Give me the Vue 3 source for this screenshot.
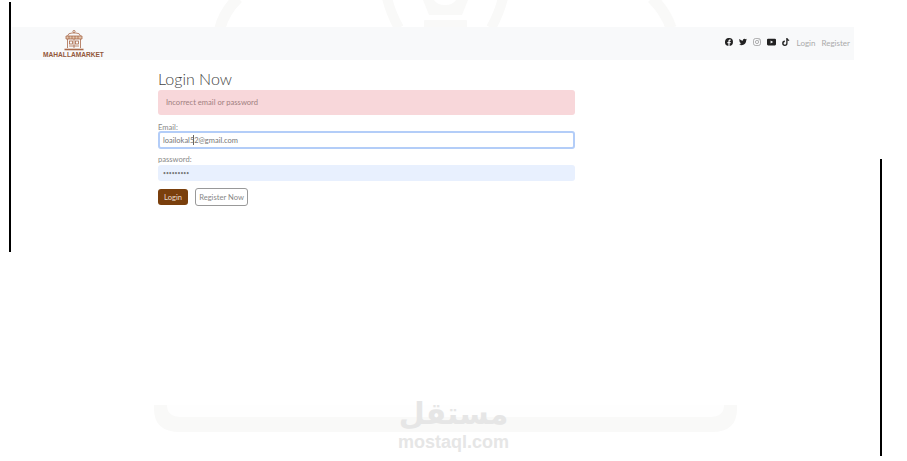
<template>
  <div class="page">
    <svg class="wm wm-top" width="907" height="30" viewBox="0 0 907 30" fill="none">
      <path d="M238 -2 Q224 12 220 28" stroke="#f9f9f8" stroke-width="11" />
      <path d="M652 -2 Q666 12 671 28" stroke="#f9f9f8" stroke-width="11" />
      <path d="M387 -2 Q391 14 399 28" stroke="#f9f9f8" stroke-width="10" />
      <path d="M503 -2 Q499 14 491 28" stroke="#f9f9f8" stroke-width="10" />
      <path d="M423 0 H434 Q437 5 445 5 Q453 5 456 0 H468 L462 15 H429 Z" fill="#f9f9f8" />
      <rect x="424" y="20" width="43" height="8" rx="1" fill="#f9f9f8" />
    </svg>
    <svg class="wm wm-bottom" width="907" height="40" viewBox="0 0 907 40" fill="none">
      <path d="M154 5 H737 V9 Q737 32 712 32 H180 Q154 32 154 9 Z" fill="#f9f9f8" />
      <path d="M167 5 H724 Q724 17 710 17 H181 Q167 17 167 5 Z" fill="#fefefe" />
    </svg>
    <div class="wm-logo">
      <div class="wm-ar">مستقل</div>
      <div class="wm-en">mostaql.com</div>
    </div>

    <span class="line line-left"></span>
    <span class="line line-right"></span>

    <nav class="navbar">
      <a class="brand">
        <svg width="20" height="21" viewBox="0 0 20 21" fill="none" stroke="#a9694a" stroke-width=".8">
          <circle cx="10" cy="1.500" r="1.100" />
          <path d="M3.500 6 Q4 3 8 3 H12 Q16 3 16.500 6" />
          <path d="M2 6 H18 V9 H2 Z" fill="#e2c5ae" />
          <path d="M5 6 V9 M8 6 V9 M11 6 V9 M14 6 V9" />
          <path d="M3.500 9 V18 M16.500 9 V18 M10 9 V18" />
          <rect x="5.500" y="11" width="3" height="3" />
          <rect x="11.500" y="11" width="3" height="3" />
          <path d="M5 16 H15" />
          <path d="M0.500 19.500 H19.500" stroke-width="1.600" />
        </svg>
        <span class="brand-name">MAHALLAMARKET</span>
      </a>
      <div class="nav-right">
        <svg class="ico" viewBox="0 0 16 16" width="8" height="8">
          <path d="M16 8a8 8 0 1 0-9.250 7.900v-5.590H4.720V8h2.030V6.240c0-2 1.190-3.110 3.020-3.110.87 0 1.790.16 1.790.16v1.970h-1c-1 0-1.300.62-1.300 1.250V8h2.220l-.36 2.310H9.250v5.590A8 8 0 0 0 16 8z" />
        </svg>
        <svg class="ico" viewBox="0 0 16 16" width="8" height="8">
          <path d="M5 14.500c6 0 9.300-5 9.300-9.300v-.4A6.700 6.700 0 0 0 16 3a6.500 6.500 0 0 1-1.900.5A3.300 3.300 0 0 0 15.500 1.700a6.600 6.600 0 0 1-2.100.8 3.300 3.300 0 0 0-5.600 3A9.300 9.300 0 0 1 1.100 2a3.300 3.300 0 0 0 1 4.400A3.300 3.300 0 0 1 .6 6v.04a3.300 3.300 0 0 0 2.600 3.200 3.300 3.300 0 0 1-1.500.06 3.300 3.300 0 0 0 3.100 2.300A6.600 6.600 0 0 1 0 13a9.300 9.300 0 0 0 5 1.500z" />
        </svg>
        <svg class="ico-line" viewBox="0 0 16 16" width="8" height="8" fill="none" stroke="#777" stroke-width="1.100">
          <rect x="1" y="1" width="14" height="14" rx="4" />
          <circle cx="8" cy="8" r="3.200" />
          <circle cx="12" cy="4" r=".4" />
        </svg>
        <svg class="ico" viewBox="0 0 16 12" width="9" height="8">
          <path fill-rule="evenodd" d="M2 0h12a2 2 0 0 1 2 2v8a2 2 0 0 1-2 2H2a2 2 0 0 1-2-2V2a2 2 0 0 1 2-2zM6.400 3.400v5.200L11 6z" />
        </svg>
        <svg class="ico" viewBox="0 0 16 16" width="8" height="8">
          <path d="M8.500 0h2.600c.2 1.900 1.300 3.100 3.200 3.300v2.700a5.700 5.700 0 0 1-3.200-1v5.500A5.400 5.400 0 1 1 5.700 5.100v2.800a2.700 2.700 0 1 0 2.800 2.600z" />
        </svg>
        <a class="nav-link login-link">Login</a>
        <a class="nav-link">Register</a>
      </div>
    </nav>

    <main class="content">
      <h1>Login Now</h1>
      <div class="alert">Incorrect email or password</div>
      <form @submit.prevent>
        <label for="email">Email:</label>
        <div class="field">
          <input id="email" class="focused" type="email" value="loailokal52@gmail.com" />
          <span class="caret"></span>
        </div>
        <label for="password">password:</label>
        <input id="password" class="filled" type="password" value="123456789" />
        <div class="actions">
          <button class="btn-login">Login</button>
          <button class="btn-register">Register Now</button>
        </div>
      </form>
    </main>
  </div>
</template>

<script setup>
</script>

<style>
html,
body {
  margin: 0;
  background: #fff;
}
</style>

<style scoped>
.page {
  position: relative;
  width: 907px;
  height: 461px;
  overflow: hidden;
  padding-top: 27px;
  box-sizing: border-box;
  background: #fff;
  font-family: Lato, "Noto Sans", sans-serif;
  color: #666;
}

.wm {
  position: absolute;
  left: 0;
}

.wm-top {
  top: 0;
}

.wm-bottom {
  top: 400px;
}

.wm-logo {
  position: absolute;
  left: 388px;
  top: 397px;
  width: 131px;
  text-align: center;
  color: #e6e6e6;
  font-family: "DejaVu Sans", sans-serif;
  font-weight: 700;
}

.wm-ar {
  font-size: 30px;
  line-height: 34px;
}

.wm-en {
  font-family: "Liberation Sans", sans-serif;
  font-size: 18px;
  line-height: 16px;
  margin-top: 3px;
}

.line {
  position: absolute;
  width: 2px;
  background: #000;
}

.line-left {
  left: 9px;
  top: 2px;
  height: 250px;
}

.line-right {
  left: 880px;
  top: 159px;
  height: 297px;
}

.navbar {
  position: relative;
  display: flex;
  align-items: center;
  justify-content: space-between;
  height: 33px;
  width: 842px;
  margin-left: 12px;
  padding: 0 4px 0 32px;
  box-sizing: border-box;
  background: #f8f9fa;
}

.brand {
  display: flex;
  flex-direction: column;
  align-items: center;
  width: 59px;
}

.brand-name {
  font-family: "Liberation Sans", sans-serif;
  font-size: 6.600px;
  font-weight: 700;
  line-height: 7px;
  color: #93583a;
  white-space: nowrap;
}

.nav-right {
  display: flex;
  align-items: center;
  gap: 6px;
  padding-bottom: 3px;
}

.ico {
  fill: #222;
}

.nav-link {
  margin-top: 2px;
  font-size: 8px;
  color: #aaa;
}

.login-link {
  margin-left: 1px;
}

.content {
  position: relative;
  width: 417px;
  margin-left: 158px;
}

h1 {
  margin: 0;
  padding-top: 8px;
  font-size: 16px;
  font-weight: 300;
  line-height: 22px;
  color: #444;
}

.alert {
  height: 25px;
  padding-left: 8px;
  border-radius: 3px;
  background: #f8d7da;
  color: #a07f80;
  font-size: 7.600px;
  line-height: 25px;
}

label {
  display: block;
  font-size: 7.600px;
  line-height: 8px;
  color: #888;
}

label[for="email"] {
  margin-top: 8px;
}

label[for="password"] {
  margin-top: 6px;
  margin-bottom: 2px;
}

.field {
  position: relative;
}

input {
  display: block;
  width: 100%;
  height: 16px;
  padding: 0 5px;
  box-sizing: border-box;
  border: 0;
  border-radius: 3px;
  outline: none;
  font-family: Lato, sans-serif;
  font-size: 7.500px;
  color: #777;
}

.focused {
  height: 18px;
  border: 2px solid #b3cdf8;
  padding: 0 3px;
}

.filled {
  background: #e8f0fe;
  font-size: 5px;
}

.caret {
  position: absolute;
  left: 35px;
  top: 4px;
  width: 1px;
  height: 10px;
  background: #666;
}

.actions {
  display: flex;
  align-items: center;
  gap: 7px;
  margin-top: 7px;
}

button {
  padding: 0;
  border-radius: 3px;
  font-family: Lato, sans-serif;
  font-size: 7.600px;
  cursor: pointer;
}

.btn-login {
  width: 30px;
  height: 16px;
  border: 0;
  background: #7a3f0c;
  color: #e8dcd0;
}

.btn-register {
  width: 53px;
  height: 18px;
  border: 1px solid #999;
  background: #fff;
  color: #888;
}
</style>
